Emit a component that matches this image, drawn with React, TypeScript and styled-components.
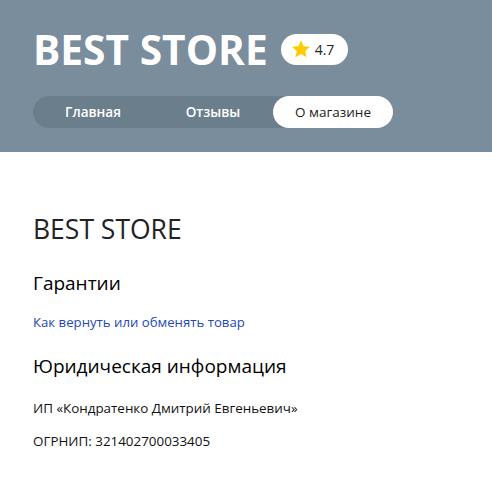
import React from "react";
import styled, { createGlobalStyle } from "styled-components";

const Global = createGlobalStyle`
  html, body { margin: 0; padding: 0; background: #fff; }
  body { font-family: "Open Sans", "Noto Sans", Arial, sans-serif; -webkit-font-smoothing: antialiased; }
`;

const Header = styled.header`
  background: #798d9d;
  height: 152px;
  box-sizing: border-box;
  padding: 25px 33px 0;
`;

const TitleRow = styled.div`
  display: flex;
  align-items: center;
  gap: 13px;
  height: 48px;
`;

const StoreTitle = styled.h1`
  margin: 0;
  color: #fff;
  font-size: 40.7px;
  font-weight: 700;
  line-height: 48px;
  letter-spacing: 0;
`;

const Rating = styled.div`
  display: flex;
  align-items: center;
  gap: 4px;
  height: 31px;
  padding: 0 14px 0 10px;
  background: #fff;
  border-radius: 16px;
  font-size: 14px;
  color: #222;
`;

const Tabs = styled.nav`
  display: flex;
  width: 360px;
  height: 32px;
  margin-top: 23px;
  background: #6b7e8c;
  border-radius: 16px;
`;

const Tab = styled.div<{ $active?: boolean }>`
  flex: 1;
  display: flex;
  align-items: center;
  justify-content: center;
  border-radius: 16px;
  font-size: 13.5px;
  font-weight: ${(p) => (p.$active ? 400 : 600)};
  color: ${(p) => (p.$active ? "#222" : "#fff")};
  background: ${(p) => (p.$active ? "#fff" : "transparent")};
`;

const Content = styled.main`
  padding: 61px 33px 0;
  display: flex;
  flex-direction: column;
`;

const SectionTitle = styled.h2`
  margin: 0;
  font-size: 26.5px;
  font-weight: 400;
  line-height: 32px;
  color: #222;
`;

const SubTitle = styled.h3<{ $mt: number }>`
  margin: ${(p) => p.$mt}px 0 0;
  font-size: 19px;
  font-weight: 400;
  line-height: 24px;
  color: #000;
`;

const Link = styled.a`
  margin-top: 18px;
  font-size: 13.2px;
  line-height: 18px;
  color: #2448b8;
  text-decoration: none;
`;

const Text = styled.p<{ $mt: number }>`
  margin: ${(p) => p.$mt}px 0 0;
  font-size: 13.4px;
  line-height: 18px;
  color: #111;
`;

const Star = () => (
  <svg width="20" height="20" viewBox="0 0 24 24">
    <path d="M12 1.5l3.1 7.1 7.7.7-5.8 5.1 1.7 7.6L12 18l-6.7 4 1.7-7.6-5.8-5.1 7.7-.7z" fill="#fc0" />
  </svg>
);

export default function App() {
  return (
    <>
      <Global />
      <Header>
        <TitleRow>
          <StoreTitle>BEST STORE</StoreTitle>
          <Rating>
            <Star />
            <span>4.7</span>
          </Rating>
        </TitleRow>
        <Tabs>
          <Tab>Главная</Tab>
          <Tab>Отзывы</Tab>
          <Tab $active>О магазине</Tab>
        </Tabs>
      </Header>
      <Content>
        <SectionTitle>BEST STORE</SectionTitle>
        <SubTitle $mt={26}>Гарантии</SubTitle>
        <Link href="#">Как вернуть или обменять товар</Link>
        <SubTitle $mt={23}>Юридическая информация</SubTitle>
        <Text $mt={21}>ИП «Кондратенко Дмитрий Евгеньевич»</Text>
        <Text $mt={15}>ОГРНИП: 321402700033405</Text>
      </Content>
    </>
  );
}
